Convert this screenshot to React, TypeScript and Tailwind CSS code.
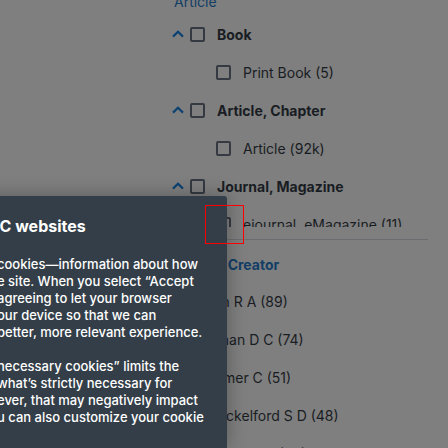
import React from "react";

type Format = { name: string; child: string };

const formats: Format[] = [
  { name: "Book", child: "Print Book (5)" },
  { name: "Article, Chapter", child: "Article (92k)" },
  { name: "Journal, Magazine", child: "ejournal, eMagazine (11)" },
];

const creators = [
  "Man R A (89)",
  "Tilman D C (74)",
  "Helmer C (51)",
  "Shackelford S D (48)",
  "Walker M L (43)",
];

const boxStyle =
  "block size-[15px] shrink-0 appearance-none rounded-[2px] border-2 border-[#353a42] bg-transparent";

function Chevron() {
  return (
    <svg width="12" height="8" viewBox="0 0 12 8" fill="none" aria-hidden="true">
      <path d="M1 6.6 6 1.8l5 4.8" stroke="#0b4272" strokeWidth="2.2" />
    </svg>
  );
}

function FormatGroup({ name, child }: Format) {
  return (
    <li>
      <div className="flex h-[38px] items-center">
        <button type="button" aria-label={`Collapse ${name}`} className="mr-1.5 w-3">
          <Chevron />
        </button>
        <label className="flex items-center gap-3 font-bold">
          <input type="checkbox" className={boxStyle} />
          <span className="pt-0.5">{name}</span>
        </label>
      </div>
      <label className="flex h-[38px] items-center gap-3 pl-11">
        <input type="checkbox" className={boxStyle} />
        <span className="pt-0.5">{child}</span>
      </label>
    </li>
  );
}

function Filters() {
  return (
    <aside className="ml-[172px] mr-5 whitespace-nowrap">
      <section className="h-[227px] overflow-hidden">
        <a href="#article" className="-mt-2 block h-[23px] pl-0.5 leading-5 text-[#123e66]">
          Article
        </a>
        <ul>
          {formats.map((f) => (
            <FormatGroup key={f.name} name={f.name} child={f.child} />
          ))}
        </ul>
      </section>
      <section className="mt-3 border-t border-[#6a6c6f] pt-[7px]">
        <h2 className="flex h-9 items-center font-bold text-[#123e66]">Author/ Creator</h2>
        <ul>
          {creators.map((c) => (
            <li key={c}>
              <label className="flex h-[38px] items-center gap-3 pl-0.5">
                <input type="checkbox" className={boxStyle} />
                {c}
              </label>
            </li>
          ))}
        </ul>
      </section>
    </aside>
  );
}

const paragraphs = [
  [
    "cookies—information about how",
    "e site. When you select “Accept",
    "agreeing to let your browser",
    "our device so that we can",
    "better, more relevant experience.",
  ],
  [
    "necessary cookies” limits the",
    "what’s strictly necessary for",
    "ever, that may negatively impact",
    "u can also customize your cookie",
  ],
];

function CookieDialog() {
  return (
    <div
      role="dialog"
      aria-labelledby="cookie-title"
      className="absolute -left-6 bottom-0 top-[196px] w-[251px] overflow-hidden whitespace-nowrap rounded-tr-[3px] bg-[#333e48] pl-[15px] pt-5 text-white shadow-[0_0_20px_rgba(0,0,0,0.3)]"
    >
      <h1 id="cookie-title" className="text-base font-bold leading-5">
        LC websites
      </h1>
      <div className="mt-5 flex flex-col gap-[17px] pl-1.5 text-[13px] font-medium leading-[17px]">
        {paragraphs.map((lines) => (
          <p key={lines[0]}>
            {lines.map((line) => (
              <span key={line} className="block">
                {line}
              </span>
            ))}
          </p>
        ))}
      </div>
    </div>
  );
}

export default function App() {
  return (
    <main className="relative h-screen overflow-hidden bg-[#7f7f7f] font-['Inter',sans-serif] text-sm text-[#191d23]">
      <Filters />
      <CookieDialog />
      <div className="absolute left-[205px] top-[205px] size-[39px] border border-[#ff0000]" />
    </main>
  );
}
